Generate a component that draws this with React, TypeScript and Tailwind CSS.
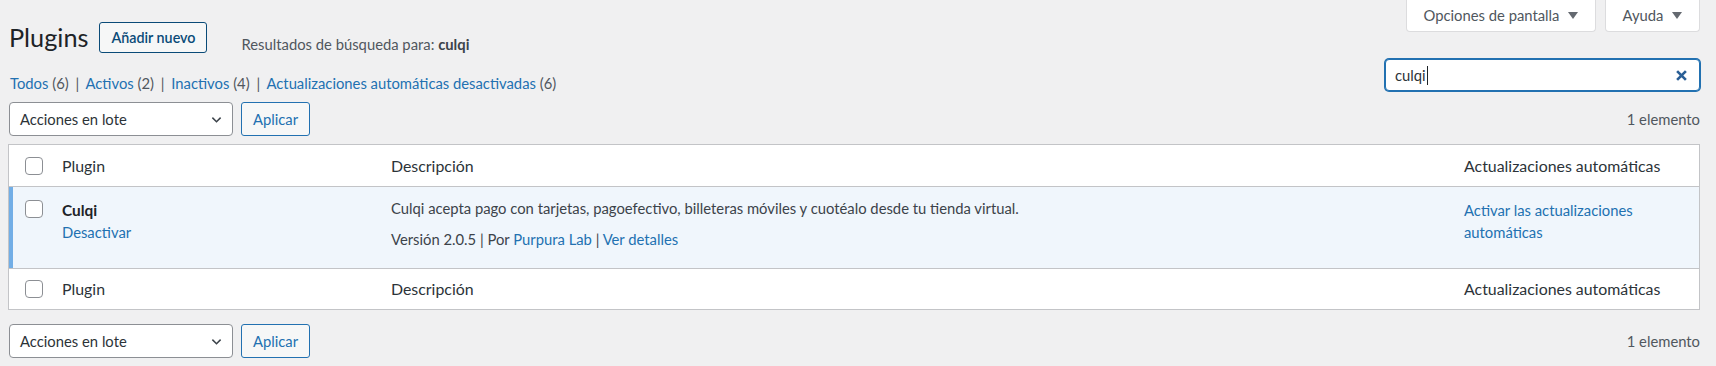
import React from 'react'

const FONT = "font-['Lato','Liberation_Sans',sans-serif]"

function Check() {
  return <span className="block h-[18px] w-[18px] rounded-[4px] border border-[#8c8f94] bg-white" />
}

function Caret() {
  return (
    <svg width="10" height="7" viewBox="0 0 10 7" className="ml-[9px]" aria-hidden>
      <path d="M0 0h10L5 7z" fill="#646970" />
    </svg>
  )
}

function BulkActions() {
  return (
    <div className="flex items-center">
      <div className="ml-[1px] flex h-[34px] w-[224px] items-center justify-between rounded-[4px] border border-[#8c8f94] bg-white pl-[10px] pr-[8px] text-[#2c3338]">
        <span>Acciones en lote</span>
        <svg width="15" height="15" viewBox="0 0 20 20" aria-hidden>
          <path d="M4.5 7.5l5.5 5.5 5.5-5.5" fill="none" stroke="#3c434a" strokeWidth="2" />
        </svg>
      </div>
      <button
        type="button"
        className="ml-[8px] h-[34px] w-[69px] rounded-[3px] border border-[#2271b1] bg-[#f6f7f7] text-[#2271b1]"
      >
        Aplicar
      </button>
    </div>
  )
}

function HeadRow({ top }: { top?: boolean }) {
  return (
    <div
      className={
        top
          ? 'flex h-[42px] items-center border-b border-[#c3c4c7] text-[15.9px] text-[#2c3338]'
          : 'flex h-[40px] items-center text-[15.9px] text-[#2c3338]'
      }
    >
      <div className="w-[43px] pl-[16px]">
        <Check />
      </div>
      <div className="w-[329px] pl-[10px]">Plugin</div>
      <div className="flex-1 pl-[10px]">Descripción</div>
      <div className="w-[245px] pl-[10px]">Actualizaciones automáticas</div>
    </div>
  )
}

export default function App() {
  return (
    <div
      className={`${FONT} h-[366px] w-[1716px] overflow-hidden bg-[#f0f0f1] pl-[8px] pr-[16px] text-[14.8px] text-[#3c434a]`}
    >
      <div className="flex items-start justify-between">
        <div className="flex items-start pt-[22px]">
          <h1 className="pl-[1px] text-[25.3px] leading-[31px] text-[#1d2327]">Plugins</h1>
          <button
            type="button"
            className="ml-[11px] h-[31px] w-[108px] rounded-[3px] border border-[#0a4b78] bg-[#f6f7f7] text-[14.3px] font-semibold text-[#0a4b78]"
          >
            Añadir nuevo
          </button>
          <span className="ml-[34px] mt-[13px] leading-[18px] text-[#50575e]">
            Resultados de búsqueda para: <strong className="font-bold text-[#3c434a]">culqi</strong>
          </span>
        </div>
        <div className="flex gap-[9px]">
          <button
            type="button"
            className="flex h-[32px] w-[190px] items-center justify-center rounded-b-[4px] border border-t-0 border-[#dcdcde] bg-white text-[#50575e]"
          >
            Opciones de pantalla
            <Caret />
          </button>
          <button
            type="button"
            className="flex h-[32px] w-[95px] items-center justify-center rounded-b-[4px] border border-t-0 border-[#dcdcde] bg-white text-[#50575e]"
          >
            Ayuda
            <Caret />
          </button>
        </div>
      </div>

      <div className="mt-[5px] flex h-[34px] items-start justify-between">
        <div className="pl-[2px] pt-[15px] leading-[20px] text-[#50575e]">
          <a className="text-[#2271b1]">Todos</a> (6) <span className="mx-[3px]">|</span>{' '}
          <a className="text-[#2271b1]">Activos</a> (2) <span className="mx-[3px]">|</span>{' '}
          <a className="text-[#2271b1]">Inactivos</a> (4) <span className="mx-[3px]">|</span>{' '}
          <a className="text-[#2271b1]">Actualizaciones automáticas desactivadas</a> (6)
        </div>
        <div className="mt-[1px] flex h-[32px] w-[315px] items-center justify-between rounded-[4px] border border-[#2271b1] bg-white pl-[9px] pr-[12px] text-[#2c3338] shadow-[0_0_0_1px_#2271b1]">
          <span className="flex items-center">
            culqi
            <span className="ml-[1px] h-[19px] w-[1px] bg-[#1d2327]" />
          </span>
          <svg width="11" height="11" viewBox="0 0 10 10" aria-hidden>
            <path d="M1 1l8 8M9 1L1 9" stroke="#2a5f96" strokeWidth="2.4" />
          </svg>
        </div>
      </div>

      <div className="mt-[10px] flex items-center justify-between">
        <BulkActions />
        <span className="text-[#50575e]">1 elemento</span>
      </div>

      <div className="mt-[8px] border border-[#c3c4c7] bg-white">
        <HeadRow top />
        <div className="flex h-[82px] items-start border-b border-[#c3c4c7] bg-[#f0f6fc] shadow-[inset_4px_0_0_#72aee6]">
          <div className="w-[43px] pl-[16px] pt-[13px]">
            <Check />
          </div>
          <div className="w-[329px] pl-[10px] pt-[12px]">
            <div className="text-[15.4px] font-bold leading-[22px] text-[#1d2327]">Culqi</div>
            <a className="mt-[1px] block leading-[21px] text-[#2271b1]">Desactivar</a>
          </div>
          <div className="flex-1 pl-[10px] pt-[10px] leading-[22px]">
            <p>
              Culqi acepta pago con tarjetas, pagoefectivo, billeteras móviles y cuotéalo desde tu tienda
              virtual.
            </p>
            <p className="mt-[9px]">
              Versión 2.0.5 | Por <a className="text-[#2271b1]">Purpura Lab</a> |{' '}
              <a className="text-[#2271b1]">Ver detalles</a>
            </p>
          </div>
          <div className="w-[245px] pl-[10px] pr-[10px] pt-[12px] leading-[22px]">
            <a className="text-[#2271b1]">Activar las actualizaciones automáticas</a>
          </div>
        </div>
        <HeadRow />
      </div>

      <div className="mt-[14px] flex items-center justify-between">
        <BulkActions />
        <span className="text-[#50575e]">1 elemento</span>
      </div>
    </div>
  )
}
